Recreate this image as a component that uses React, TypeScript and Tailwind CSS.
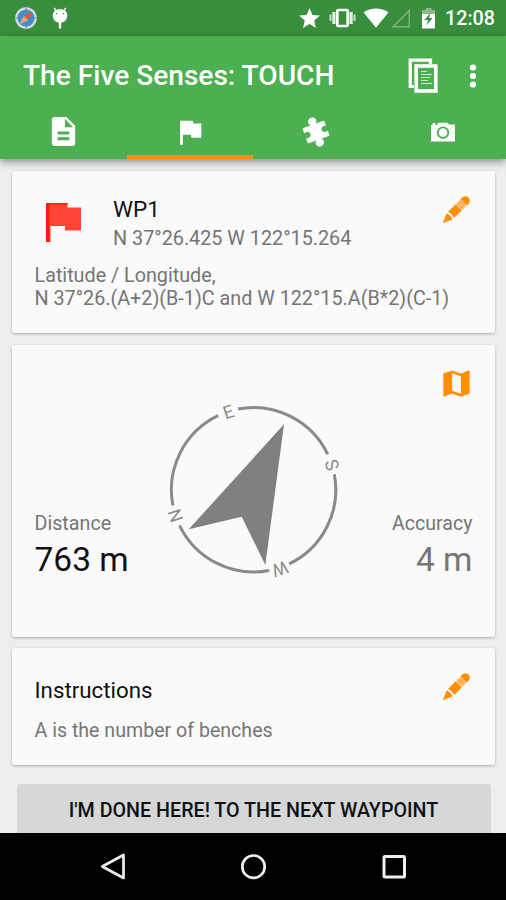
import type { ReactNode } from "react";
import { MdDescription, MdFlag, MdMap, MdStar } from "react-icons/md";

function SafariIcon() {
  return (
    <svg width="22" height="22" viewBox="0 0 22 22">
      <circle cx="11" cy="11" r="10.8" fill="#d3dcda" />
      <circle cx="11" cy="11" r="8.6" fill="#3f8fd0" />
      <path d="M11 1v3M11 18v3M1 11h3M18 11h3" stroke="#6f8f8a" strokeWidth="1.2" />
      <path d="M17.5 4.5 8.8 8.8l4.4 4.4z" fill="#e8562a" />
      <path d="M4.5 17.5 8.8 8.8l4.4 4.4z" fill="#e9a27c" />
    </svg>
  );
}

function AndroidIcon() {
  return (
    <svg width="16" height="22" viewBox="0 0 16 22">
      <path d="m2.2.8 2.2 3.4M13.8.8l-2.2 3.4" stroke="#fff" strokeWidth="1.3" />
      <path d="M.8 7.5C1.2 4 4 2.2 8 2.2s6.8 1.8 7.2 5.3c.3 4.2-2 8.300-7.200 8.300S.5 11.700.8 7.500z" fill="#fff" />
      <circle cx="4.7" cy="6.8" r=".7" fill="#388e3c" />
      <circle cx="11.3" cy="6.8" r=".7" fill="#388e3c" />
      <path d="M8 15v5.5" stroke="#fff" strokeWidth="2.4" strokeLinecap="round" />
    </svg>
  );
}

function VibrateIcon() {
  return (
    <svg width="27" height="20" viewBox="0 0 27 20">
      <path d="M1.5 6.5V13M25.5 6.5V13" stroke="#fff" strokeOpacity=".75" strokeWidth="2" />
      <path d="M4.9 4v12M22.1 4v12" stroke="#fff" strokeOpacity=".85" strokeWidth="3.2" />
      <rect x="8.3" y="2" width="10.4" height="16" rx="1" fill="none" stroke="#fff" strokeWidth="2.7" />
    </svg>
  );
}

function WifiIcon() {
  return (
    <svg width="26" height="20" viewBox="0 0 26 20">
      <path d="M.5 4.2C7.5-.9 18.5-.9 25.5 4.2L13 19.8z" fill="#fff" />
    </svg>
  );
}

function SignalIcon() {
  return (
    <svg width="20" height="20" viewBox="0 0 20 20">
      <path d="M2 18.7 18.3 2.4v16.3z" fill="none" stroke="#fff" strokeOpacity=".35" strokeWidth="1.4" />
    </svg>
  );
}

function BatteryIcon() {
  return (
    <svg width="15" height="21" viewBox="0 0 15 21">
      <path d="M4.5 0h6v2H14v5H1V2h3.5z" fill="#fff" fillOpacity=".4" />
      <path d="M1 6h13v13.5a1 1 0 0 1-1 1H2a1 1 0 0 1-1-1z" fill="#fff" />
      <path d="M9.5 4.5 3.7 12h3.5l-1.7 5.5 6-7.5H8z" fill="#388e3c" />
    </svg>
  );
}

function CopyIcon() {
  return (
    <svg width="30" height="36" viewBox="0 0 30 36" fill="none" stroke="#fff">
      <path d="M6 28.5H2.2V2.2h20.3V6" strokeWidth="3.2" />
      <rect x="8.2" y="8" width="19.6" height="25" strokeWidth="3.6" />
      <path d="M13 13.5h6M13 16.5h11M13 19.5h9M13 22.5h7M13 25.5h11" strokeWidth="1.2" strokeOpacity=".75" />
    </svg>
  );
}

function MoreIcon() {
  return (
    <svg width="8" height="26" viewBox="0 0 8 26" fill="#fff">
      <circle cx="4" cy="4.5" r="3.1" />
      <circle cx="4" cy="13" r="3.1" />
      <circle cx="4" cy="21.5" r="3.1" />
    </svg>
  );
}

function PuzzleIcon() {
  return (
    <svg width="30" height="30" viewBox="0 0 30 30" className="overflow-visible">
      <path
        transform="rotate(-20 15 15)"
        d="M4 7.500h7l1.900.7c.7-1.200-1.600-1.700-1.600-4.200a3.500 3.500 0 0 1 7.400 0c0 2.500-2.300 3-1.600 4.200l1.900-.7h7v4.300c-1.800-.8-5.500-.3-5.500 3.200s3.700 4 5.500 3.200v4.300h-7l-1.900-.7c-.7 1.200 1.600 1.700 1.600 4.200a3.500 3.500 0 0 1-7.400 0c0-2.500 2.300-3 1.600-4.200l-1.900.7H4v-4.300c1.800.8 5.500.3 5.500-3.200S5.800 11 4 11.800z"
        fill="#fff"
        stroke="#fff"
        strokeWidth="1"
        strokeLinejoin="round"
      />
    </svg>
  );
}

function CameraIcon() {
  return (
    <svg width="26" height="20" viewBox="0 0 26 20">
      <path d="M1 3h1.5V1h3v2H7l1.5-2.2h9L19 2.5h6v17H1z" fill="#fff" />
      <circle cx="13" cy="10.7" r="5.3" fill="none" stroke="#4caf50" strokeWidth="1.9" />
    </svg>
  );
}

function PencilIcon() {
  return (
    <svg width="28" height="28" viewBox="0 0 28 28">
      <g transform="translate(.8 27.2) rotate(-45)">
        <path d="M0 0 9.5-4.2C10.800-2.500 10.800 2.500 9.500 4.200z" fill="#ff8f00" />
        <path d="M11.600-4.400H22.500v8.800H11.600c1.200-2.200 1.200-6.600 0-8.800z" fill="#ff8f00" />
        <path d="M22.500-4.400h7v8.800h-7z" fill="#ffc98a" />
        <path d="M22.500-2h7M22.500 0h7M22.500 2h7M25-4.400v8.800M27.300-4.400v8.800" stroke="#ff9a20" strokeWidth=".8" />
        <path d="M29.500-4.400h2.500A4.400 4.400 0 0 1 32 4.400h-2.500z" fill="#ff8f00" />
      </g>
    </svg>
  );
}

const cardinals = [
  { label: "E", x: 57.5, y: 92, angle: -18 },
  { label: "S", x: 161, y: 145, angle: 72 },
  { label: "W", x: 109, y: 249, angle: 162 },
  { label: "N", x: 4.5, y: 195.5, angle: -108 },
];

function Compass() {
  return (
    <svg className="overflow-visible" width="166" height="168" viewBox="0 86 166 168">
      <circle
        cx="82.6"
        cy="169.8"
        r="82.2"
        fill="none"
        stroke="#8a8a8a"
        strokeWidth="3"
        pathLength="360"
        strokeDasharray="75.2 14.8"
        transform="rotate(-100.9 82.6 169.8)"
      />
      <path d="M113 104.3 17.7 209.3l53-12.6L94.3 245z" fill="#808080" />
      {cardinals.map((c) => (
        <text
          key={c.label}
          transform={`translate(${c.x} ${c.y}) rotate(${c.angle})`}
          y="6.3"
          textAnchor="middle"
          className="fill-[#8a8a8a] text-[18px]"
        >
          {c.label}
        </text>
      ))}
    </svg>
  );
}

function Card({ className, children }: { className: string; children: ReactNode }) {
  return (
    <section className={`ml-[12px] w-[483px] rounded-[3px] bg-[#fafafa] shadow-[0_1px_3px_rgba(0,0,0,0.28)] ${className}`}>
      {children}
    </section>
  );
}

export default function App() {
  return (
    <div className="flex h-[900px] w-[506px] flex-col overflow-hidden bg-[#eeeeee] font-['Roboto',sans-serif] text-[#757575]">
      <div className="flex h-[36px] shrink-0 items-center bg-[#388e3c] pl-[15px] pr-[11px] text-white">
        <SafariIcon />
        <div className="ml-[15px]">
          <AndroidIcon />
        </div>
        <div className="ml-auto flex items-center">
          <MdStar size={25} />
          <div className="ml-[7px]"><VibrateIcon /></div>
          <div className="ml-[7px]"><WifiIcon /></div>
          <div className="ml-[2px]"><SignalIcon /></div>
          <div className="ml-[10px]"><BatteryIcon /></div>
          <span className="ml-[9px] w-[50px] whitespace-nowrap pt-[2px] text-[19.7px] font-medium leading-[36px]">12:08</span>
        </div>
      </div>

      <header className="z-10 flex h-[123px] shrink-0 flex-col bg-[#4caf50] text-white shadow-[0_3px_8px_rgba(0,0,0,0.4)]">
        <div className="flex h-[79px] items-center pl-[23px] pr-[29px]">
          <h1 className="mt-[2px] text-[28.1px] font-medium">The Five Senses: TOUCH</h1>
          <div className="ml-auto flex items-center gap-[31px]">
            <CopyIcon />
            <MoreIcon />
          </div>
        </div>
        <nav className="grid h-[44px] grid-cols-4">
          <div className="flex h-[33px] items-center justify-center"><MdDescription size={35} /></div>
          <div className="flex flex-col items-center justify-between border-b-4 border-[#f09314]">
            <MdFlag size={34} />
          </div>
          <div className="flex h-[33px] items-center justify-center"><PuzzleIcon /></div>
          <div className="flex h-[33px] items-center justify-center"><CameraIcon /></div>
        </nav>
      </header>

      <main className="flex min-h-0 flex-1 flex-col overflow-hidden pt-[12px]">
        <Card className="h-[162px] shrink-0 pl-[22.5px] pr-[25px] pt-[24px]">
          <div className="flex h-[69px] items-start">
            <svg className="mt-[8px] ml-[11.5px]" width="36" height="40" viewBox="0 0 36 40">
              <path d="M0 0h21.5v4.5H35V27.500H19v-4.500H4.500V39H0z" fill="#ff4435" />
              <path d="M0 0h21.5v1.500H3.500v37.500H0z" fill="#f8200f" />
            </svg>
            <div className="ml-[31px]">
              <h2 className="text-[22.5px] leading-[28px] text-[#111]">WP1</h2>
              <p className="mt-[1px] text-[19.8px] leading-[30px]">N 37°26.425 W 122°15.264</p>
            </div>
            <div className="ml-auto mt-[1px]"><PencilIcon /></div>
          </div>
          <p className="text-[19.75px] leading-[23px]">
            Latitude / Longitude,
            <br />
            <span className="whitespace-nowrap">N 37°26.(A+2)(B-1)C and W 122°15.A(B*2)(C-1)</span>
          </p>
        </Card>

        <Card className="mt-[12px] grid h-[292px] shrink-0 grid-cols-[1fr_166px_1fr] px-[22.5px]">
          <div className="flex flex-col justify-end pb-[55px]">
            <p className="text-[19.7px] leading-[28px]">Distance</p>
            <p className="text-[33.5px] leading-[44px] text-[#111]">763 m</p>
          </div>
          <div className="pt-[61px]"><Compass /></div>
          <div className="flex flex-col items-end justify-between pb-[55px] pt-[21px]">
            <MdMap size={35} className="-mr-[1px] text-[#ff8f00]" />
            <div className="text-right">
              <p className="text-[19.6px] leading-[28px]">Accuracy</p>
              <p className="text-[33.5px] leading-[44px]">4 m</p>
            </div>
          </div>
        </Card>

        <Card className="mt-[11px] h-[117px] shrink-0 pl-[22.5px] pr-[25px] pt-[25px]">
          <div className="flex h-[44px] items-start justify-between">
            <h2 className="mt-[2px] text-[22.3px] leading-[30px] text-[#111]">Instructions</h2>
            <PencilIcon />
          </div>
          <p className="text-[19.6px] leading-[28px]">A is the number of benches</p>
        </Card>

        <button className="ml-[16.5px] mt-[19px] h-[68px] w-[474px] shrink-0 rounded-[3px] bg-[#d6d7d7] pb-[14px] text-[19.7px] font-medium text-[#111]">
          I'M DONE HERE! TO THE NEXT WAYPOINT
        </button>
      </main>

      <footer className="flex h-[67px] shrink-0 items-center justify-between bg-black px-[99px]">
        <svg width="28" height="28" viewBox="0 0 28 28" fill="none" stroke="#eee" strokeWidth="2.7" strokeLinejoin="round">
          <path d="M3.3 13.5 24.5 2v23z" />
        </svg>
        <svg width="28" height="28" viewBox="0 0 28 28" fill="none" stroke="#eee" strokeWidth="2.7">
          <circle cx="14.5" cy="13.7" r="11.2" />
        </svg>
        <svg width="28" height="28" viewBox="0 0 28 28" fill="none" stroke="#eee" strokeWidth="3">
          <rect x="5" y="3.5" width="20.5" height="20.5" rx="1" />
        </svg>
      </footer>
    </div>
  );
}
